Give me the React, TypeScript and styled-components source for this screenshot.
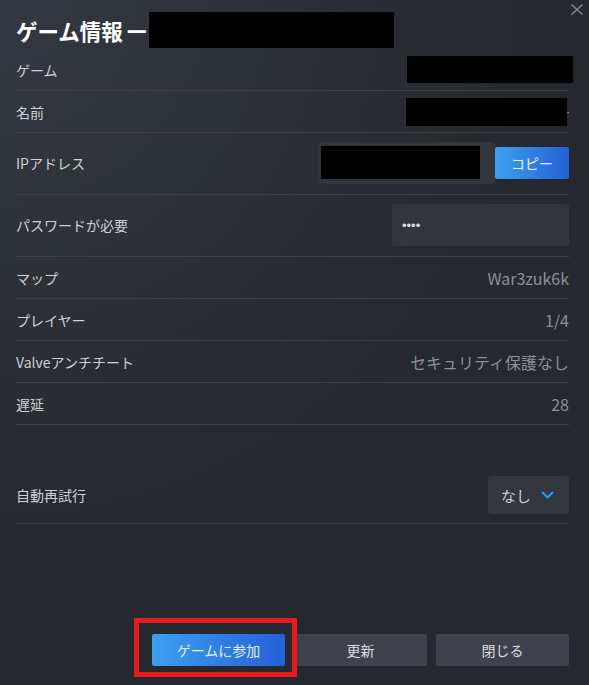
import React from "react";
import styled, { createGlobalStyle } from "styled-components";

const GlobalStyle = createGlobalStyle`
  html, body {
    margin: 0;
    padding: 0;
    background: #25282e;
    overflow: hidden;
  }
  body {
    font-family: "Noto Sans CJK JP", "Noto Sans", sans-serif;
  }
  * { box-sizing: border-box; }
`;

const Dialog = styled.div`
  position: relative;
  height: 685px;
  width: 589px;
  display: flex;
  flex-direction: column;
  padding: 0 20px 19px 16px;
  background: radial-gradient(circle at top left, rgba(74, 81, 92, 0.4) 0%, rgba(75, 81, 92, 0) 60%), #25282e;
  color: #cfd2d6;
`;

const CloseButton = styled.button`
  position: absolute;
  top: 2px;
  right: 5px;
  width: 14px;
  height: 14px;
  padding: 0;
  border: none;
  background: transparent;
  display: flex;
  align-items: center;
  justify-content: center;
  cursor: pointer;
`;

const Header = styled.div`
  margin-top: 12px;
  height: 37px;
  display: flex;
  align-items: flex-start;
`;

const Title = styled.h1`
  margin: 0;
  height: 36px;
  display: flex;
  align-items: center;
  font-size: 21.5px;
  font-weight: 700;
  color: #ffffff;
  white-space: nowrap;
`;

const Dash = styled.span`
  font-family: "Liberation Sans", sans-serif;
  font-size: 18px;
  font-weight: 700;
  margin: 0 3px 0 5px;
  text-shadow: 0 1px 0 #ffffff;
`;

const Redacted = styled.div<{ $w: number; $h: number; $shift?: number }>`
  width: ${(p) => p.$w}px;
  height: ${(p) => p.$h}px;
  background: #000000;
  flex: none;
  margin-right: ${(p) => -(p.$shift ?? 0)}px;
`;

const Row = styled.div<{ $pad?: string }>`
  display: flex;
  align-items: center;
  justify-content: space-between;
  min-height: 42px;
  padding: ${(p) => p.$pad ?? "0"};
  border-bottom: 1px solid #3c3f46;
`;

const Label = styled.span`
  font-size: 14px;
  color: #cfd2d6;
  white-space: nowrap;
`;

const Value = styled.span`
  font-size: 16px;
  color: #8b9097;
  white-space: nowrap;
`;

const ValueGroup = styled.div`
  display: flex;
  align-items: center;
`;

const Tick = styled.span`
  width: 2px;
  height: 1px;
  background: #8b9097;
  margin-top: 2px;
`;

const InputWell = styled.div`
  width: 177px;
  height: 42px;
  border-radius: 3px;
  background: #32353c;
  padding: 4px 0 0 3px;
`;

const CopyButton = styled.button`
  width: 74px;
  height: 32px;
  border: none;
  border-radius: 2px;
  background: linear-gradient(to right, #3ca0f1, #2460d6);
  color: #e9f1fc;
  font-family: inherit;
  font-size: 14px;
  padding: 0;
  cursor: pointer;
`;

const PasswordField = styled.div`
  width: 177px;
  height: 42px;
  border-radius: 3px;
  background: #32353c;
  display: flex;
  align-items: center;
  padding-left: 10px;
  font-family: "Liberation Sans", sans-serif;
  font-size: 13px;
  color: #dcdee1;
`;

const Spacer = styled.div`
  height: 41px;
`;

const Dropdown = styled.button`
  width: 81px;
  height: 38px;
  border: none;
  border-radius: 3px;
  background: #32363d;
  display: flex;
  align-items: center;
  gap: 10px;
  padding: 0 0 0 13px;
  font-family: inherit;
  font-size: 15px;
  color: #cfd2d6;
  cursor: pointer;
`;

const Footer = styled.div`
  margin-top: auto;
  display: flex;
  justify-content: flex-end;
  gap: 9px;
`;

const ButtonWrap = styled.div`
  position: relative;
`;

const DialogButton = styled.button<{ $primary?: boolean }>`
  width: 133px;
  height: 32px;
  border: none;
  border-radius: 2px;
  padding: 0;
  font-family: inherit;
  font-size: 14px;
  color: ${(p) => (p.$primary ? "#e6effb" : "#dcdee1")};
  background: ${(p) => (p.$primary ? "linear-gradient(to right, #3ca0f1, #2460d6)" : "#3d424c")};
  cursor: pointer;
`;

const Highlight = styled.div`
  position: absolute;
  top: -16px;
  bottom: -11px;
  left: -18px;
  right: -12px;
  border: 5px solid #e31b1b;
  pointer-events: none;
`;

const infoRows: { label: string; value: string }[] = [
  { label: "マップ", value: "War3zuk6k" },
  { label: "プレイヤー", value: "1/4" },
  { label: "Valveアンチチート", value: "セキュリティ保護なし" },
  { label: "遅延", value: "28" },
];

export default function App() {
  return (
    <>
      <GlobalStyle />
      <Dialog>
        <CloseButton aria-label="閉じる">
          <svg width="12" height="11" viewBox="0 0 12 11" fill="none">
            <path d="M0.5 0.5 L11.5 10.5 M11.5 0.5 L0.5 10.5" stroke="#8a8d93" strokeWidth="1.3" />
          </svg>
        </CloseButton>
        <Header>
          <Title>
            ゲーム情報<Dash>—</Dash>
          </Title>
          <Redacted $w={245} $h={36} />
        </Header>

        <Row>
          <Label>ゲーム</Label>
          <Redacted $w={166} $h={27} $shift={4} />
        </Row>
        <Row>
          <Label>名前</Label>
          <ValueGroup>
            <Redacted $w={161} $h={28} />
            <Tick />
          </ValueGroup>
        </Row>
        <Row $pad="9px 0 10px">
          <Label>IPアドレス</Label>
          <ValueGroup>
            <InputWell>
              <Redacted $w={159} $h={33} />
            </InputWell>
            <CopyButton>コピー</CopyButton>
          </ValueGroup>
        </Row>
        <Row $pad="9px 0 10px">
          <Label>パスワードが必要</Label>
          <PasswordField>••••</PasswordField>
        </Row>
        {infoRows.map((r) => (
          <Row key={r.label}>
            <Label>{r.label}</Label>
            <Value>{r.value}</Value>
          </Row>
        ))}

        <Spacer />
        <Row $pad="10px 0 9px">
          <Label>自動再試行</Label>
          <Dropdown>
            <span>なし</span>
            <svg width="13" height="8" viewBox="0 0 13 8" fill="none">
              <path d="M1 1 L6.5 6.5 L12 1" stroke="#1a9fff" strokeWidth="2" />
            </svg>
          </Dropdown>
        </Row>

        <Footer>
          <ButtonWrap>
            <DialogButton $primary>ゲームに参加</DialogButton>
            <Highlight />
          </ButtonWrap>
          <DialogButton>更新</DialogButton>
          <DialogButton>閉じる</DialogButton>
        </Footer>
      </Dialog>
    </>
  );
}
